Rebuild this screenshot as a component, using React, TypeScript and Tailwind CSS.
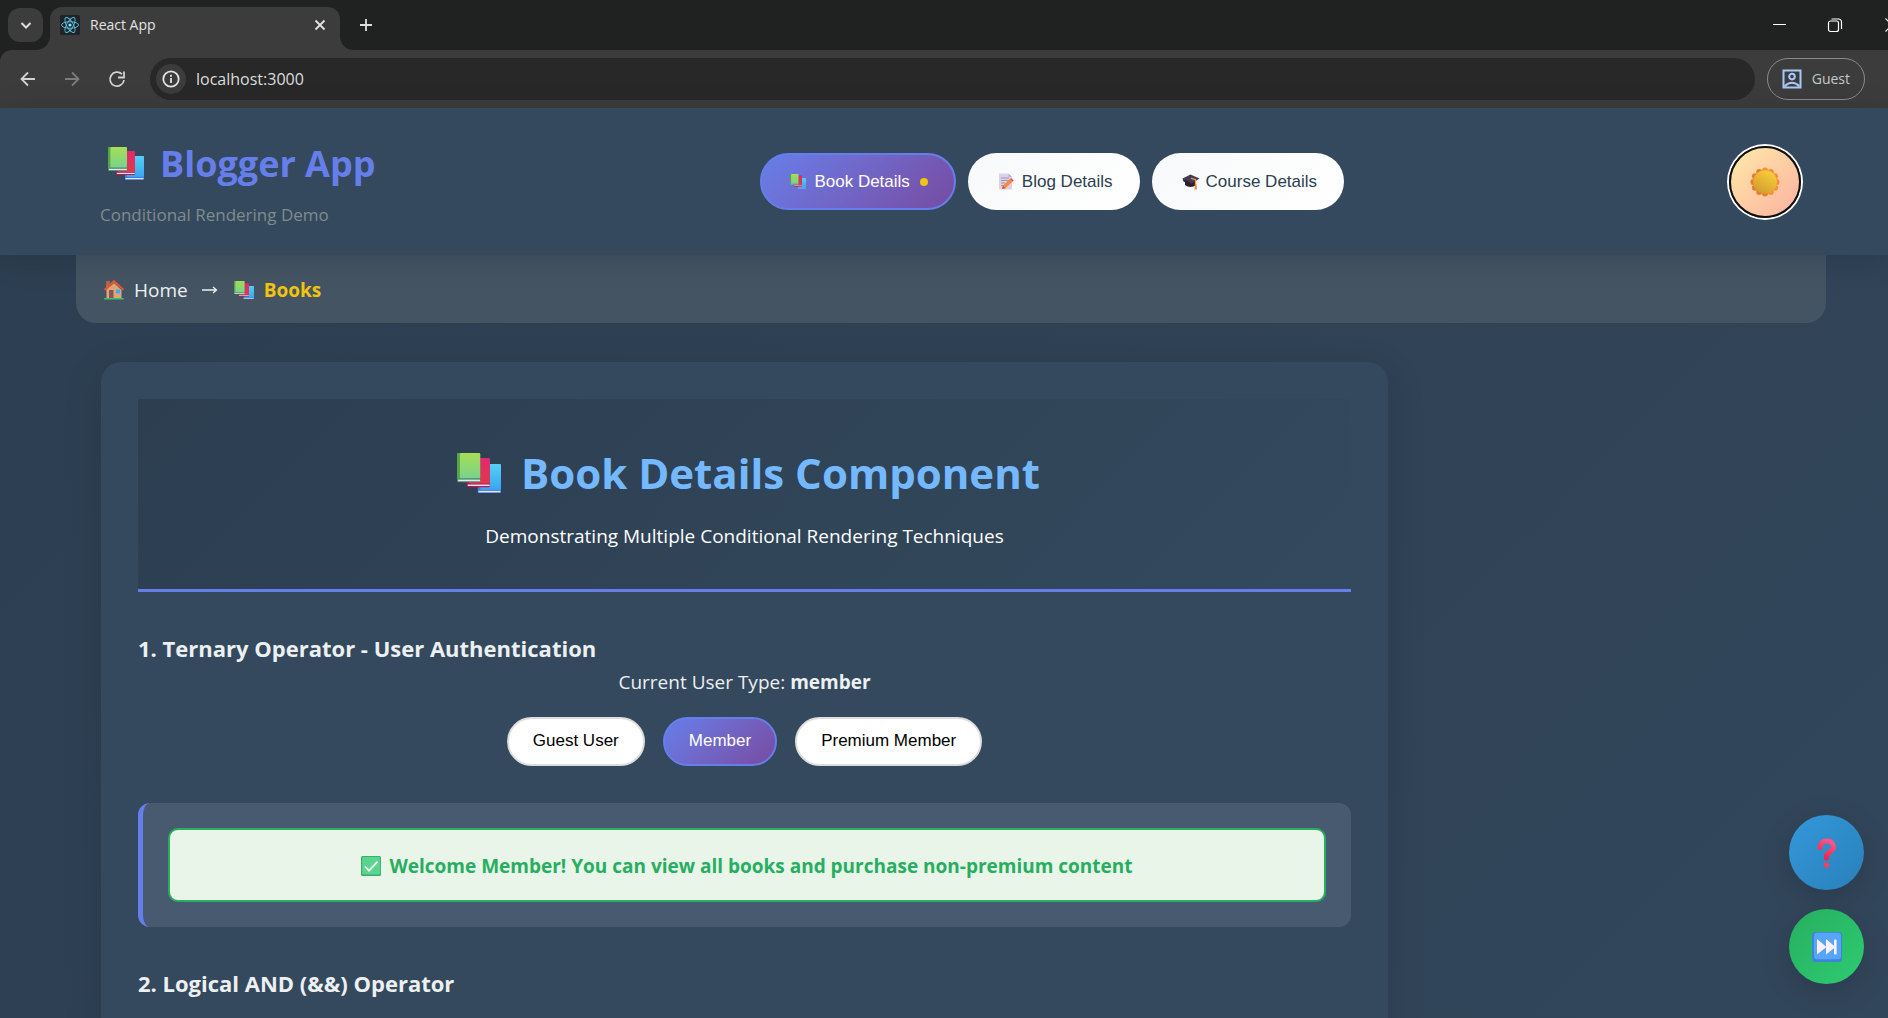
import { useId, useState } from "react";
import type { ReactNode } from "react";

const NAV_BUTTON =
  "flex h-[57px] items-center rounded-full border-2 font-['Liberation_Sans',sans-serif] text-[17px]";

function BooksIcon({ className }: { className?: string }) {
  const id = useId();
  return (
    <svg viewBox="0 0 36 33" className={className} aria-hidden="true">
      <defs>
        <linearGradient id={id + "g"} x1="0" y1="0" x2="0" y2="1">
          <stop offset="0" stopColor="#a8dd55" />
          <stop offset="1" stopColor="#78d38c" />
        </linearGradient>
        <linearGradient id={id + "r"} x1="0" y1="0" x2="0" y2="1">
          <stop offset="0" stopColor="#e3286f" />
          <stop offset="1" stopColor="#dd3a4c" />
        </linearGradient>
        <linearGradient id={id + "b"} x1="0" y1="0" x2="0" y2="1">
          <stop offset="0" stopColor="#54d0f5" />
          <stop offset="1" stopColor="#3aa5f2" />
        </linearGradient>
      </defs>
      <rect x="17" y="9" width="19" height="24" rx="1" fill="#3f7fd4" />
      <rect x="19" y="9" width="17" height="21" rx="1" fill={`url(#${id}b)`} />
      <rect x="17.5" y="31" width="18" height="1.2" fill="#e9ddf7" />
      <rect x="8" y="4" width="19" height="24" rx="1" fill="#b3174f" />
      <rect x="10" y="4" width="17" height="21" rx="1" fill={`url(#${id}r)`} />
      <rect x="8.8" y="25.8" width="18" height="1.2" fill="#f2dcf0" />
      <rect x="0" y="0" width="19" height="24" rx="1" fill="#3f8f66" />
      <rect x="0" y="0" width="3" height="21" rx="1" fill="#56a548" />
      <rect x="2.4" y="0" width="16.6" height="20.6" rx="1" fill={`url(#${id}g)`} />
      <rect x="0.9" y="21.8" width="18" height="1.3" fill="#efe3fa" />
    </svg>
  );
}

function MemoIcon({ className }: { className?: string }) {
  return (
    <svg viewBox="0 0 16 17" className={className} aria-hidden="true">
      <path d="M1 0.5h9.5l3.5 3.5v12.5H1z" fill="#dcd3e6" />
      <path d="M10.5 0.5l3.5 3.5h-3.5z" fill="#b9aecb" />
      <path d="M3 5h8M3 7.5h8M3 10h4M3 12.5h3" stroke="#9b93b0" strokeWidth="1" />
      <path d="M4 16l1-3.6 7-6.4 2.6 2.6L7.5 15.3z" fill="#f98a3c" />
      <path d="M12 6l1.2-.8 2.5 2.3-1.1 1.1z" fill="#e8365a" />
      <path d="M4 16l1-3.6 2.5 2.9z" fill="#e2553b" />
    </svg>
  );
}

function CapIcon({ className }: { className?: string }) {
  return (
    <svg viewBox="0 0 18 17" className={className} aria-hidden="true">
      <path d="M3 7v5c3 2.600 8 2.600 11 0V7z" fill="#2a2030" />
      <path d="M0.5 5.500L8.500 1.500l9 4L9 11z" fill="#463a55" />
      <path d="M0.5 5.500L9 10v2L1.500 8.500z" fill="#2d2235" />
      <path d="M9 5.300l4.500 1.500v5" fill="none" stroke="#f4a63a" strokeWidth="1.2" />
      <path d="M12.800 11h1.600l.600 5.500h-2.400z" fill="#f0893a" />
    </svg>
  );
}

function SunIcon({ className }: { className?: string }) {
  const id = useId();
  const petals = Array.from({ length: 12 }, (_, i) => {
    const a = (i * Math.PI) / 6;
    return { x: 15 + Math.sin(a) * 11.6, y: 15 - Math.cos(a) * 11.6 };
  });
  return (
    <svg viewBox="0 0 30 30" className={className} aria-hidden="true">
      <defs>
        <linearGradient id={id} x1="0.8" y1="0" x2="0.2" y2="1">
          <stop offset="0" stopColor="#fbd13c" />
          <stop offset="1" stopColor="#cf9a2c" />
        </linearGradient>
      </defs>
      {petals.map((p, i) => (
        <circle key={i} cx={p.x} cy={p.y} r="3" fill={i > 5 ? "#e87a35" : "#f98f33"} />
      ))}
      <circle cx="15" cy="15" r="11.8" fill={`url(#${id})`} />
    </svg>
  );
}

function HouseIcon({ className }: { className?: string }) {
  return (
    <svg viewBox="0 0 20 20" className={className} aria-hidden="true">
      <rect x="2" y="1" width="4" height="9" fill="#a66b4f" />
      <path d="M2.5 10L10 3l7.5 7v8.5h-15z" fill="#e0a677" />
      <path d="M0.5 9.8L10 1.2l9.5 8.6" fill="none" stroke="#ee5536" strokeWidth="2" />
      <rect x="5" y="10" width="4.5" height="8.5" fill="#8a5450" />
      <rect x="12" y="9.5" width="4" height="4" fill="#2fb4ee" />
      <rect x="0" y="18" width="20" height="1.6" rx="0.8" fill="#38c172" />
    </svg>
  );
}

function CheckIcon({ className }: { className?: string }) {
  return (
    <svg viewBox="0 0 20 20" className={className} aria-hidden="true">
      <rect width="20" height="20" rx="1.5" fill="#43a873" />
      <rect x="1.2" y="1" width="18" height="17.6" rx="1" fill="#58d68d" />
      <path d="M4 10.5l4 4.2 8.500-9" fill="none" stroke="#fff" strokeWidth="1.8" />
    </svg>
  );
}

function QuestionIcon({ className }: { className?: string }) {
  const id = useId();
  return (
    <svg viewBox="0 0 20 30" className={className} aria-hidden="true">
      <defs>
        <linearGradient id={id} x1="0.7" y1="0" x2="0.3" y2="1">
          <stop offset="0" stopColor="#fb5589" />
          <stop offset="1" stopColor="#f02447" />
        </linearGradient>
      </defs>
      <path
        d="M3.2 9.500C3.200 5.500 6 3 10 3s6.500 2.400 6.500 6c0 5-7 4.500-7 9v2"
        fill="none"
        stroke={`url(#${id})`}
        strokeWidth="5"
        strokeLinecap="round"
        strokeLinejoin="round"
      />
      <circle cx="9.5" cy="27" r="2.7" fill="#f5405c" />
    </svg>
  );
}

function SkipIcon({ className }: { className?: string }) {
  return (
    <svg viewBox="0 0 30 30" className={className} aria-hidden="true">
      <rect width="30" height="30" rx="3.5" fill="#3c83de" />
      <rect x="2" y="0.8" width="27" height="26.5" rx="3" fill="#56a5f7" />
      <path d="M5 7l9.500 8L5 22.500zM14 7l9.500 8L14 22.500z" fill="#fbf0ff" />
      <rect x="22" y="7.5" width="2.6" height="15" rx="1" fill="#fbf0ff" />
    </svg>
  );
}

function ReactLogo() {
  return (
    <svg viewBox="0 0 20 20" className="size-5 shrink-0" aria-hidden="true">
      <rect width="20" height="20" rx="1.5" fill="#20232a" />
      <g fill="none" stroke="#58c4dc" strokeWidth="0.9">
        <ellipse cx="10" cy="10" rx="8.5" ry="3.3" />
        <ellipse cx="10" cy="10" rx="8.5" ry="3.3" transform="rotate(60 10 10)" />
        <ellipse cx="10" cy="10" rx="8.5" ry="3.3" transform="rotate(120 10 10)" />
      </g>
      <circle cx="10" cy="10" r="1.6" fill="#8be4f7" />
    </svg>
  );
}

function LineIcon({ d, className, width = 2 }: { d: string; className?: string; width?: number }) {
  return (
    <svg
      viewBox="0 0 20 20"
      className={"size-5 shrink-0 " + (className ?? "")}
      fill="none"
      stroke="currentColor"
      strokeWidth={width}
      aria-hidden="true"
    >
      <path d={d} />
    </svg>
  );
}

function BrowserChrome() {
  return (
    <div className="shrink-0 bg-[#202221] font-['Open_Sans',sans-serif]">
      <div className="flex h-[50px] items-stretch pl-2">
        <button
          aria-label="Search tabs"
          className="mt-2 grid h-[34px] w-[35px] place-items-center rounded-xl bg-[#3c3c3c] text-[#dedede]"
        >
          <LineIcon d="M5.500 8l4.500 4.500L14.500 8" />
        </button>
        <svg viewBox="0 0 14 14" className="-ml-[7px] size-[14px] self-end" aria-hidden="true">
          <path d="M14 0v14H0C8 14 14 8 14 0z" fill="#3c3c3c" />
        </svg>
        <div className="mt-[7px] flex w-[290px] items-center rounded-t-xl bg-[#3c3c3c] pb-[7px] pl-2.5 text-sm text-[#e3e3e3]">
          <ReactLogo />
          <span className="ml-2.5 flex-1">React App</span>
          <button aria-label="Close tab" className="mr-2.5 text-[#e3e3e3]">
            <LineIcon d="M5.500 5.500l9 9M14.500 5.500l-9 9" width={1.8} />
          </button>
        </div>
        <svg viewBox="0 0 14 14" className="size-[14px] self-end" aria-hidden="true">
          <path d="M0 0v14h14C6 14 0 8 0 0z" fill="#3c3c3c" />
        </svg>
        <button aria-label="New tab" className="ml-0.5 text-[#dedede]">
          <LineIcon d="M10 4v12M4 10h12" width={1.8} />
        </button>
        <div className="ml-auto flex items-center gap-9 overflow-hidden text-white">
          <button aria-label="Minimize">
            <LineIcon d="M3 9.500h13" width={1} />
          </button>
          <button aria-label="Restore">
            <LineIcon
              d="M2.500 8a2 2 0 0 1 2-2h6a2 2 0 0 1 2 2v6.500a2 2 0 0 1-2 2h-6a2 2 0 0 1-2-2zM5.500 4h7a3 3 0 0 1 3 3v7"
              width={1.2}
            />
          </button>
          <button aria-label="Close" className="-mr-[14px]">
            <LineIcon d="M3.500 3.500l13 13M16.500 3.500l-13 13" width={1.2} />
          </button>
        </div>
      </div>
      <div className="flex h-[58px] items-center rounded-tl-xl bg-[#3c3c3c] pr-[23px] pl-[18px]">
        <button aria-label="Back" className="text-[#d2d2d2]">
          <LineIcon d="M17 10H3.500M10 3.500L3.500 10l6.500 6.500" width={1.8} />
        </button>
        <button aria-label="Forward" className="ml-6 text-[#7c7c7c]">
          <LineIcon d="M3 10h13.500M10 3.500l6.500 6.500-6.500 6.500" width={1.8} />
        </button>
        <button aria-label="Reload" className="ml-[25px] text-[#d2d2d2]">
          <LineIcon d="M15 5.200A7 7 0 1 0 17 11M17 2.500v6h-6" width={1.8} />
        </button>
        <div className="ml-[23px] flex h-[42px] flex-1 items-center rounded-full bg-[#282828] pl-1.5">
          <button
            aria-label="Site information"
            className="grid size-[30px] place-items-center rounded-full bg-[#3c3c3c] text-[#e3e3e3]"
          >
            <LineIcon
              d="M10 2.300a7.700 7.700 0 1 0 0 15.400a7.700 7.700 0 1 0 0-15.400M10 9v5M10 5.800v2"
              width={1.8}
            />
          </button>
          <input
            aria-label="Address"
            defaultValue="localhost:3000"
            className="ml-2.5 flex-1 bg-transparent text-base text-[#dcdcdc] outline-none"
          />
        </div>
        <button className="ml-3 flex h-[42px] items-center gap-2.5 rounded-full border border-[#8a8a8a] px-3.5 text-sm text-[#c7c7c7]">
          <LineIcon
            className="text-[#a8c7fa]"
            d="M1.500 1.500h17v17h-17zM3 17c4-4.500 10-4.500 14 0M10 4.800a2.800 2.800 0 1 0 0 5.600a2.800 2.800 0 1 0 0-5.600"
          />
          Guest
        </button>
      </div>
    </div>
  );
}

function AppHeader() {
  return (
    <header className="relative z-10 h-[147px] shrink-0 bg-[#34495e] shadow-[0_5px_30px_rgba(0,0,0,0.14)]">
      <div className="flex h-full items-center justify-between pr-[87px] pl-[100px]">
        <div className="pt-1">
          <h1 className="flex items-center pl-2 text-4xl leading-[50px] font-bold text-[#667eea]">
            <BooksIcon className="mr-4 w-9" />
            Blogger App
          </h1>
          <p className="mt-3 text-[17px] leading-7 text-[#7f8c8d]">Conditional Rendering Demo</p>
        </div>
        <nav className="flex gap-3">
          <button
            className={`${NAV_BUTTON} border-[#667eea] bg-linear-135 from-[#667eea] to-[#764ba2] pr-[26px] pl-7 text-white`}
          >
            <BooksIcon className="mr-2 w-4" />
            Book Details
            <span className="ml-2.5 size-2 rounded-full bg-[#f1c40f]" />
          </button>
          <button
            className={`${NAV_BUTTON} border-transparent bg-linear-135 from-[#f8f9fa] to-white pr-[25px] pl-7 text-[#2c3e50] [background-origin:border-box]`}
          >
            <MemoIcon className="mr-2 w-4" />
            Blog Details
          </button>
          <button
            className={`${NAV_BUTTON} border-transparent bg-linear-135 from-[#f8f9fa] to-white pr-[25px] pl-7 text-[#2c3e50] [background-origin:border-box]`}
          >
            <CapIcon className="mr-1.5 w-[18px]" />
            Course Details
          </button>
        </nav>
        <button
          aria-label="Toggle theme"
          className="grid size-[72px] place-items-center rounded-full border-2 border-[#101010] bg-linear-135 from-[#ffeaa7] to-[#fab1a0] ring-2 ring-white"
        >
          <SunIcon className="size-[30px]" />
        </button>
      </div>
    </header>
  );
}

function UserButton({
  selected,
  onClick,
  children,
}: {
  selected: boolean;
  onClick: () => void;
  children: ReactNode;
}) {
  const tone = selected
    ? "border-[#667eea] bg-linear-135 from-[#667eea] to-[#764ba2] text-white"
    : "border-[#dddddd] bg-white text-black";
  return (
    <button
      onClick={onClick}
      className={`h-[49px] rounded-full border-2 px-6 pb-0.5 font-['Liberation_Sans',sans-serif] text-[17px] ${tone}`}
    >
      {children}
    </button>
  );
}

const USER_TYPES = [
  { id: "guest", label: "Guest User" },
  { id: "member", label: "Member" },
  { id: "premium", label: "Premium Member" },
];

function BookDetails() {
  const [userType, setUserType] = useState("member");
  return (
    <article className="rounded-[20px] bg-[#34495e] p-[37px] text-[#ecf0f1] shadow-[0_10px_40px_rgba(0,0,0,0.12)]">
      <div className="h-[193px] border-b-3 border-[#667eea] bg-linear-135 from-[#2c3e50] to-[#34495e] pt-[42px] text-white">
        <h2 className="flex items-center justify-center pl-2 text-[42px] leading-[64px] font-bold text-[#74b9ff]">
          <BooksIcon className="mr-5 w-11" />
          Book Details Component
        </h2>
        <p className="mt-[15px] text-center text-[19px] leading-8">
          Demonstrating Multiple Conditional Rendering Techniques
        </p>
      </div>
      <section className="mt-[39px]">
        <h3 className="text-[22px] leading-[34px] font-bold">1. Ternary Operator - User Authentication</h3>
        <p className="text-center text-[19px] leading-[34px]">
          Current User Type: <strong>{userType}</strong>
        </p>
        <div className="mt-[18px] flex justify-center gap-[18px]">
          {USER_TYPES.map((u) => (
            <UserButton key={u.id} selected={u.id === userType} onClick={() => setUserType(u.id)}>
              {u.label}
            </UserButton>
          ))}
        </div>
        <div className="mt-[37px] rounded-xl border-l-5 border-[#667eea] bg-[#485a6f] p-[25px]">
          <div className="flex h-[74px] items-center justify-center rounded-[10px] border-2 border-[#27ae60] bg-[#e8f5e8] pt-0.5 text-[19px] font-bold text-[#27ae60]">
            <CheckIcon className="mr-2 w-5" />
            Welcome Member! You can view all books and purchase non-premium content
          </div>
        </div>
      </section>
      <section className="mt-[39px]">
        <h3 className="text-[22px] leading-[34px] font-bold">2. Logical AND (&amp;&amp;) Operator</h3>
      </section>
    </article>
  );
}

export default function App() {
  return (
    <div className="flex h-screen flex-col overflow-hidden bg-linear-135 from-[#2c3e50] to-[#32465b] font-['Open_Sans',sans-serif]">
      <BrowserChrome />
      <AppHeader />
      <div className="min-h-0 flex-1 overflow-hidden">
        <div className="mr-[62px] ml-[76px]">
          <nav
            aria-label="Breadcrumb"
            className="flex h-[68px] items-center rounded-b-[20px] bg-[#445463] pt-0.5 pl-7 text-[19px] text-[#ecf0f1]"
          >
            <HouseIcon className="mr-2.5 w-5" />
            <a href="#home">Home</a>
            <svg
              viewBox="0 0 16 10"
              className="mr-4 ml-3.5 w-4"
              fill="none"
              stroke="currentColor"
              strokeWidth="1.3"
              aria-hidden="true"
            >
              <path d="M0 5h14.500M11 2l3.500 3-3.500 3" />
            </svg>
            <BooksIcon className="mr-2.5 w-5" />
            <a href="#books" className="font-bold text-[#f1c40f]">
              Books
            </a>
          </nav>
          <main className="mt-[39px] grid grid-cols-[1fr_375px] gap-[38px] px-[25px]">
            <BookDetails />
          </main>
        </div>
      </div>
      <div className="fixed right-6 bottom-[34px] z-20 flex flex-col gap-[19px]">
        <button
          aria-label="Help"
          className="grid size-[75px] place-items-center rounded-full bg-linear-135 from-[#3498db] to-[#2980b9] shadow-[0_8px_30px_rgba(0,0,0,0.15)]"
        >
          <QuestionIcon className="h-[30px]" />
        </button>
        <button
          aria-label="Skip to next"
          className="grid size-[75px] place-items-center rounded-full bg-linear-135 from-[#27ae60] to-[#2ecc71] shadow-[0_8px_30px_rgba(0,0,0,0.15)]"
        >
          <SkipIcon className="size-[30px]" />
        </button>
      </div>
    </div>
  );
}
